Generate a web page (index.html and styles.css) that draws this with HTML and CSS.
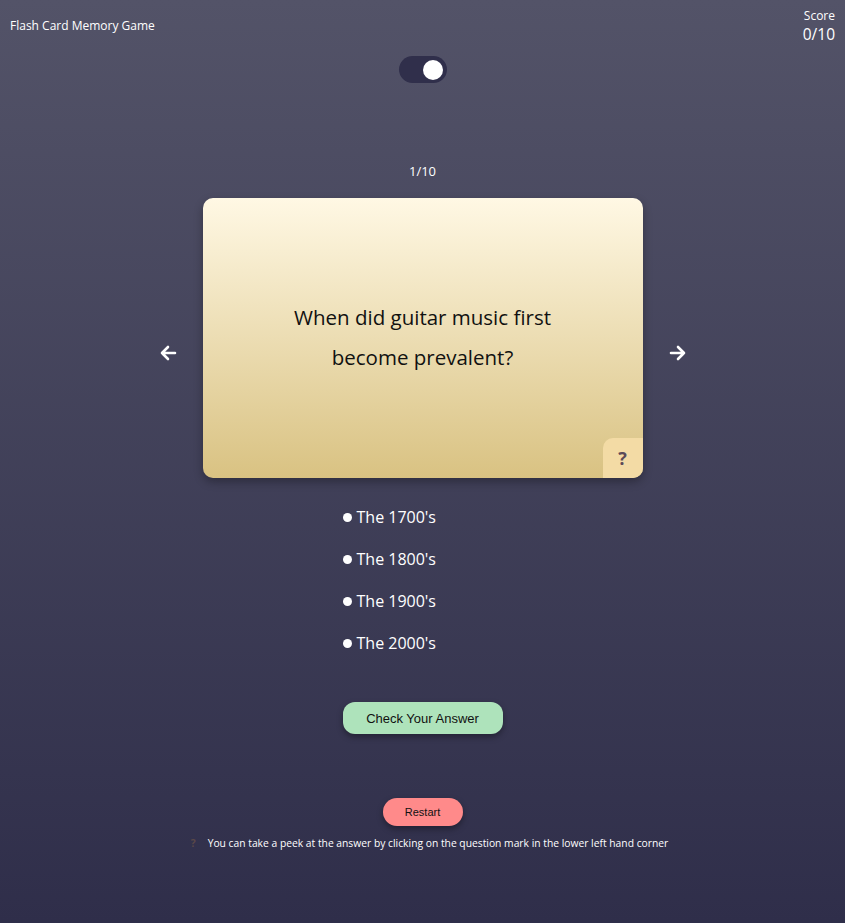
FILE: index.html
```html
<!DOCTYPE html>
<html>
<head>
<meta charset="utf-8">
<link rel="stylesheet" href="styles.css">
</head>
<body>
<div class="page">
  <header class="topbar">
    <div class="title">Flash Card Memory Game</div>
    <div class="score">
      <div class="score-label">Score</div>
      <div class="score-value">0/10</div>
    </div>
  </header>
  <div class="toggle-row">
    <div class="toggle"><div class="knob"></div></div>
  </div>
  <div class="counter">1/10</div>
  <div class="card-row">
    <button class="arrow">
      <svg width="18" height="16" viewBox="0 0 18 16"><path d="M16 8H3M9 2L3 8l6 6" fill="none" stroke="#fff" stroke-width="2.6" stroke-linecap="round" stroke-linejoin="round"/></svg>
    </button>
    <div class="card">
      <div class="question">When did guitar music first<br>become prevalent?</div>
      <div class="peek">?</div>
    </div>
    <button class="arrow">
      <svg width="18" height="16" viewBox="0 0 18 16"><path d="M2 8h13M9 2l6 6-6 6" fill="none" stroke="#fff" stroke-width="2.6" stroke-linecap="round" stroke-linejoin="round"/></svg>
    </button>
  </div>
  <ul class="options">
    <li><span class="dot"></span>The 1700's</li>
    <li><span class="dot"></span>The 1800's</li>
    <li><span class="dot"></span>The 1900's</li>
    <li><span class="dot"></span>The 2000's</li>
  </ul>
  <button class="check">Check Your Answer</button>
  <button class="restart">Restart</button>
  <p class="hint"><span class="hint-q">?</span>You can take a peek at the answer by clicking on the question mark in the lower left hand corner</p>
</div>
</body>
</html>
```
FILE: styles.css
```css
* { box-sizing: border-box; }
html, body { margin: 0; padding: 0; }
body {
  width: 845px;
  height: 923px;
  background: linear-gradient(180deg, #535368 0%, #2f2e4a 100%);
  font-family: "Open Sans", sans-serif;
  color: #fff;
  overflow: hidden;
}
.page {
  display: flex;
  flex-direction: column;
  align-items: center;
  height: 100%;
}
.topbar {
  width: 100%;
  display: flex;
  justify-content: space-between;
  align-items: flex-start;
  padding: 8px 10px 0 10px;
  height: 56px;
}
.title {
  font-size: 12px;
  margin-top: 9px;
  font-weight: 500;
}
.score {
  display: flex;
  flex-direction: column;
  align-items: flex-end;
}
.score-label { font-size: 12px; line-height: 15px; font-weight: 500; }
.score-value { font-size: 15.5px; line-height: 22px; font-weight: 500; }
.toggle-row { height: 27px; }
.toggle {
  width: 48px;
  height: 27px;
  border-radius: 14px;
  background: #302f4b;
  display: flex;
  align-items: center;
  justify-content: flex-end;
  padding-right: 4px;
}
.knob {
  width: 20px;
  height: 20px;
  border-radius: 50%;
  background: #fff;
}
.counter {
  margin-top: 79px;
  font-size: 13px;
  line-height: 18px;
  font-weight: 500;
}
.card-row {
  margin-top: 18px;
  display: flex;
  align-items: center;
  gap: 20px;
}
.arrow {
  background: none;
  border: 0;
  padding: 0;
  width: 30px;
  height: 30px;
  margin-top: 30px;
  display: flex;
  align-items: center;
  justify-content: center;
  cursor: pointer;
}
.card {
  position: relative;
  width: 440px;
  height: 280px;
  border-radius: 10px;
  background: linear-gradient(180deg, #fff8e4 0%, #d9c282 100%);
  box-shadow: 0 4px 10px rgba(0,0,0,0.3);
  display: flex;
  align-items: center;
  justify-content: center;
  overflow: hidden;
}
.question {
  color: #111;
  font-size: 20.5px;
  line-height: 40px;
  text-align: center;
  font-weight: 500;
  margin-bottom: 2px;
}
.peek {
  position: absolute;
  right: 0;
  bottom: 0;
  width: 40px;
  height: 40px;
  background: #f3dba5;
  border-top-left-radius: 10px;
  color: #5b4a58;
  font-weight: 700;
  font-size: 18px;
  display: flex;
  align-items: center;
  justify-content: center;
}
.options {
  list-style: none;
  margin: 18px 0 0 0;
  padding: 0;
  width: 160px;
}
.options li {
  display: flex;
  align-items: center;
  font-size: 16px;
  height: 42px;
  font-weight: 500;
}
.dot {
  width: 9px;
  height: 9px;
  border-radius: 50%;
  background: #fff;
  margin-right: 5px;
}
.check {
  margin-top: 38px;
  width: 160px;
  height: 32px;
  border: 0;
  border-radius: 12px;
  background: #aee3bb;
  font-family: "Liberation Sans", Arial, sans-serif;
  font-size: 13px;
  color: #111;
  box-shadow: 0 3px 6px rgba(0,0,0,0.35);
}
.restart {
  margin-top: 64px;
  width: 80px;
  height: 28px;
  border: 0;
  border-radius: 14px;
  background: #ff8a8a;
  font-family: "Liberation Sans", Arial, sans-serif;
  font-size: 11px;
  color: #111;
  box-shadow: 0 3px 6px rgba(0,0,0,0.35);
}
.hint {
  margin: 10px 0 0 0;
  padding-left: 14px;
  font-size: 10.3px;
  line-height: 14px;
  font-weight: 500;
}
.hint-q {
  color: #5a4848;
  font-weight: 700;
  margin-right: 12px;
}
```
